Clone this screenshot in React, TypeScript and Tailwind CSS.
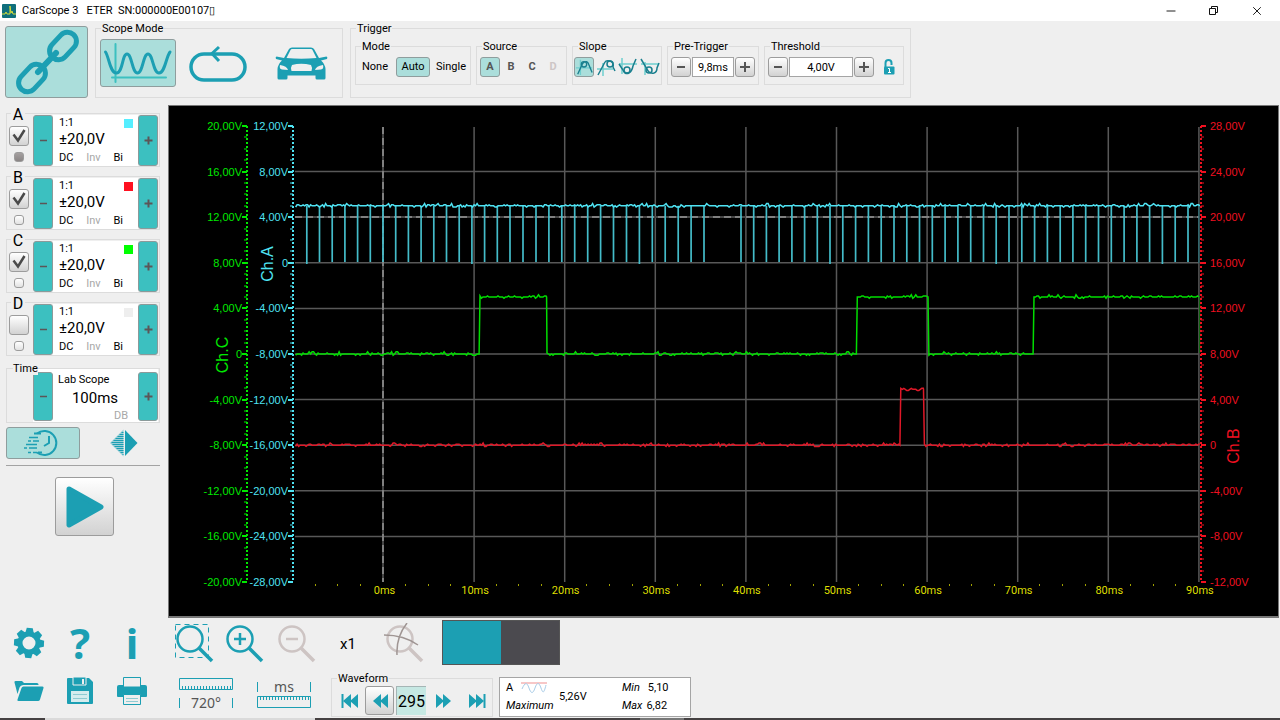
import type { ReactNode } from "react";
import { Minus, X } from "lucide-react";
import clsx from "clsx";

const TEAL = "#1c9fb3";

const raised = "border border-[#9c9c9c] bg-linear-to-b from-white to-[#d2d2d2]";
const pressed = "border border-[#8f9d9d] bg-[#abdedb]";

/* ---------- small building blocks ---------- */

function Group({ title, className, children }: { title: string; className?: string; children: ReactNode }) {
  return (
    <fieldset className="min-w-0 border border-[#dcdcdc]">
      <legend className="ml-[5px] px-px pt-0.5 text-[11px] leading-[14px]">{title}</legend>
      <div className={clsx("flex", className)}>{children}</div>
    </fieldset>
  );
}

function StepButton({ label, plus }: { label: string; plus?: boolean }) {
  return (
    <button
      type="button"
      aria-label={label}
      className="flex w-5 shrink-0 items-center justify-center self-stretch rounded-[3px] border border-[#8b9a9a] bg-[#3cc0c0]"
    >
      <svg viewBox="0 0 9 9" className="size-[9px]" stroke="#5c5557" strokeWidth={plus ? 2 : 1.5}>
        <path d={plus ? "M0.500 4.500h8M4.500 0.500v8" : "M1 4.500h7"} />
      </svg>
    </button>
  );
}

function SpinButton({ label, plus }: { label: string; plus?: boolean }) {
  return (
    <button type="button" aria-label={label} className={clsx("flex size-5 items-center justify-center rounded-[3px]", raised)}>
      <svg viewBox="0 0 10 10" className="size-2.5" stroke="#555" strokeWidth="2">
        <path d={plus ? "M0 5h10M5 0v10" : "M1 5h8"} />
      </svg>
    </button>
  );
}

/* ---------- header ---------- */

function TitleBar() {
  return (
    <header className="flex h-[21px] items-center bg-white pr-px pl-0.5 text-[11px]">
      <svg viewBox="0 0 14 14" className="size-3.5">
        <rect width="14" height="14" rx="1" fill="#0f6f7c" />
        <path d="M0 10h3l1-2 1 2h3V2l1 7 1-2 1 3h3" fill="none" stroke="#d3dc3a" />
      </svg>
      <h1 className="ml-1.5 pt-0.5 whitespace-pre">{"CarScope 3   ETER  SN:000000E00107▯"}</h1>
      <div className="ml-auto flex">
        <button type="button" aria-label="Minimize" className="flex w-[42px] justify-center">
          <Minus className="size-3.5" strokeWidth={1.5} />
        </button>
        <button type="button" aria-label="Restore" className="flex w-[42px] items-center justify-center">
          <svg viewBox="0 0 11 11" className="size-[11px]" fill="none" stroke="#111">
            <path d="M1.500 3.500h6v6h-6zM3.500 3V1.500h6v6H8" />
          </svg>
        </button>
        <button type="button" aria-label="Close" className="flex w-[45px] justify-center">
          <X className="size-3.5" strokeWidth={1.5} />
        </button>
      </div>
    </header>
  );
}

function ChainIcon() {
  return (
    <svg viewBox="0 0 68 68" className="size-[68px]" fill="none" stroke={TEAL}>
      <rect x="34.500" y="9" width="31" height="18" rx="9" strokeWidth="5" transform="rotate(-47 50 18)" />
      <rect x="3.500" y="41" width="31" height="18" rx="9" strokeWidth="5" transform="rotate(-47 19 50)" />
      <path d="M25 44 43 25" strokeWidth="6" strokeLinecap="round" />
    </svg>
  );
}

function CarIcon() {
  return (
    <svg viewBox="0 0 53 33" className="h-[33px] w-[53px]" fill={TEAL}>
      <path
        fillRule="evenodd"
        d="M9 11 14 2Q15 0.500 17 0.500H36Q38 0.500 39 2L44 11 51.500 9.500Q53 10 52 12L46 13.500Q50 17 50.500 22V31Q50.500 32.500 49 32.500H42Q40.500 32.500 40.500 31V28.500H12.500V31Q12.500 32.500 11 32.500H4Q2.500 32.500 2.500 31V22Q3 17 7 13.500L1 12Q0 10 1.500 9.500ZM11.500 11Q26 12.500 41.500 11L37.500 3Q37 2 36 2H17Q16 2 15.500 3ZM5 18Q4 22 7 22.500L13 23Q12 19 5 18ZM48 18Q49 22 46 22.500L40 23Q41 19 48 18ZM17 18Q15.500 20 16.500 24H36.500Q37.500 20 36 18Q26 15.500 17 18Z"
      />
    </svg>
  );
}

// light lines are the trigger level and instant, dark one is the signal
const SLOPES = [
  { name: "Rising slope", level: "M1 11H19M6 2V19", signal: "M3 18 8 7Q9 4 13 4 15 5 16 9L19 16", cx: 10, cy: 7 },
  { name: "Rising slope late", level: "M1 12H17M7 6V19", signal: "M2 18 9 5Q10 3 14 4 18 5 17 10L19 14", cx: 14, cy: 7 },
  { name: "Falling slope", level: "M1 7H19M4 1V17", signal: "M1 7 5 13Q7 18 11 16 14 14 15 9L18 2", cx: 9, cy: 13 },
  { name: "Falling slope late", level: "M1 7H19M5 5V18", signal: "M1 2 7 12Q9 17 14 16 17 15 17 11L19 6", cx: 9, cy: 13 },
];

function Toolbar() {
  return (
    <div className="flex h-[84px] items-start gap-[7px] pl-[5px]">
      <button type="button" aria-label="Connect" aria-pressed="true" className={clsx("mt-[5px] flex h-[72px] w-[83px] items-center justify-center rounded-[3px]", pressed)}>
        <ChainIcon />
      </button>

      <div className="-mt-px flex gap-[7px]">
        <Group title="Scope Mode" className="gap-1 pt-[3px] pb-2.5 pl-1">
          <button type="button" aria-label="Waveform mode" aria-pressed="true" className={clsx("h-12 w-19 rounded-[3px]", pressed)}>
            <svg viewBox="0 0 76 48" className="-m-px h-12 w-19" fill="none" strokeLinecap="round">
              <path d="M15.500 5V43M12 38.500H66" stroke="#3cc0c0" strokeWidth="2" />
              <path d="M5.500 13C9 18 10 34 16.500 34S22 15 27 15 32 34 37.500 34 43 15 48 15 53 34 59 34C65 34 66 18 70 13" stroke={TEAL} strokeWidth="3" />
            </svg>
          </button>
          <button type="button" aria-label="Loop mode" className="flex h-12 w-19 justify-center">
            <svg viewBox="0 0 58 48" className="h-12 w-[58px]" fill="none" stroke={TEAL} strokeWidth="3.500">
              <rect x="2" y="15" width="54" height="26" rx="13" />
              <path d="M30 8 23 14.500 30 22" strokeWidth="3" />
            </svg>
          </button>
          <button type="button" aria-label="Vehicle" className="flex h-12 w-[82px] items-center justify-center">
            <CarIcon />
          </button>
        </Group>

        <Group title="Trigger" className="gap-[5px] pt-0.5 pr-1.5 pb-3 pl-1">
          <Group title="Mode" className="gap-1 px-0.5 pt-[3px] pb-[7px] text-[11px]">
            <button type="button" className="h-5 w-[34px]">None</button>
            <button type="button" aria-pressed="true" className={clsx("h-5 w-[34px] rounded-[3px]", pressed)}>Auto</button>
            <button type="button" className="h-5 w-[34px]">Single</button>
          </Group>

          <Group title="Source" className="gap-px px-[3px] pt-[3px] pb-[7px] text-[11px] font-bold text-[#555]">
            <button type="button" aria-pressed="true" className={clsx("size-5 rounded-[3px]", pressed)}>A</button>
            <button type="button" className="size-5">B</button>
            <button type="button" className="size-5">C</button>
            <button type="button" disabled className="size-5 text-[#cdc6c6]">D</button>
          </Group>

          <Group title="Slope" className="gap-0.5 px-px pt-[3px] pb-[7px]">
            {SLOPES.map((s, i) => (
              <button key={s.name} type="button" aria-label={s.name} className={clsx("size-5 rounded-[3px]", i === 0 && pressed)}>
                <svg viewBox="0 0 20 20" className="size-full" fill="none">
                  <path d={s.level} stroke="#6fcfcf" strokeWidth="1.500" />
                  <path d={s.signal} stroke="#197f8e" strokeWidth="1.500" />
                  <circle cx={s.cx} cy={s.cy} r="3" stroke="#197f8e" strokeWidth="1.500" />
                </svg>
              </button>
            ))}
          </Group>

          <Group title="Pre-Trigger" className="gap-px px-[3px] pt-[3px] pb-[7px]">
            <SpinButton label="Less pre-trigger" />
            <input aria-label="Pre-trigger" defaultValue="9,8ms" className="h-5 w-[42px] border border-[#a5a5a5] bg-white text-center text-[11px]" />
            <SpinButton label="More pre-trigger" plus />
          </Group>

          <Group title="Threshold" className="gap-px pt-[3px] pr-2 pb-[7px] pl-[3px]">
            <SpinButton label="Lower threshold" />
            <input aria-label="Threshold" defaultValue="4,00V" className="h-5 w-16 border border-[#a5a5a5] bg-white text-center text-[11px]" />
            <SpinButton label="Raise threshold" plus />
            <button type="button" aria-label="Lock threshold" className="ml-2 flex h-5 items-center">
              <svg viewBox="0 0 12 16" className="h-4 w-3">
                <path d="M2.500 8V4a3 3 0 0 1 6 0v2" fill="none" stroke={TEAL} strokeWidth="2" />
                <rect x="1" y="7.500" width="10.500" height="8" rx="1" fill={TEAL} />
                <path d="M5 9.500h1.500v4M5 13.500h3" fill="none" stroke="#fff" />
              </svg>
            </button>
          </Group>
        </Group>
      </div>
    </div>
  );
}

/* ---------- left column ---------- */

const CHANNELS = [
  { id: "A", on: true, reference: true, swatch: "bg-[#55eeff]" },
  { id: "B", on: true, reference: false, swatch: "bg-[#ff1020]" },
  { id: "C", on: true, reference: false, swatch: "bg-[#00ff00]" },
  { id: "D", on: false, reference: false, swatch: "bg-[#eeeeee]" },
];

function Channel({ id, on, reference, swatch }: (typeof CHANNELS)[number]) {
  return (
    <section className="flex h-[54px] border border-[#dcdcdc] pt-px pr-px">
      <div className="flex w-[26px] flex-col items-center">
        <label htmlFor={`on-${id}`} className="-mt-2.5 mb-px -ml-1 bg-[#efefef] px-0.5 text-base leading-5">{id}</label>
        <span className="relative -ml-0.5 size-5">
          <input id={`on-${id}`} type="checkbox" defaultChecked={on} className={clsx("peer size-5 appearance-none rounded-[3px]", raised)} />
          <svg viewBox="0 0 20 20" className="pointer-events-none absolute inset-0 hidden size-5 peer-checked:block" fill="none" stroke="#4a4a4a" strokeWidth="2.500">
            <path d="M4.500 8.500 9 14.500 15.500 4" />
          </svg>
        </span>
        <input
          type="radio"
          name="reference"
          aria-label={`Trigger on ${id}`}
          defaultChecked={reference}
          className="mt-1.5 -ml-0.5 size-2.5 appearance-none rounded-[3px] border border-[#9c9c9c] bg-linear-to-b from-white to-[#e2e2e2] checked:from-[#a5a0a0] checked:to-[#8a8585]"
        />
      </div>
      <StepButton label={`${id} range down`} />
      <div className="flex-1 bg-white pt-px pr-[5px] pl-1.5">
        <div className="flex h-[15px] items-center justify-between text-[11px]">
          <span>1:1</span>
          <span className={clsx("size-[9px]", swatch)} />
        </div>
        <p className="text-[15px] leading-[17px]">±20,0V</p>
        <div className="flex justify-between pt-0.5 pr-2.5 text-[11px] leading-4">
          <button type="button">DC</button>
          <button type="button" className="text-[#a8a8a8]">Inv</button>
          <button type="button">Bi</button>
        </div>
      </div>
      <StepButton label={`${id} range up`} plus />
    </section>
  );
}

function Gear() {
  return (
    <svg viewBox="-16 -16 32 32" className="size-8" fill={TEAL}>
      <circle r="9" fill="none" stroke={TEAL} strokeWidth="5" />
      {[0, 45, 90, 135, 180, 225, 270, 315].map((a) => (
        <path key={a} d="M-4.500 -9-3 -15H3L4.500 -9Z" transform={`rotate(${a + 3})`} />
      ))}
    </svg>
  );
}

function Sidebar() {
  return (
    <aside className="flex w-[168px] shrink-0 flex-col pt-2 pr-2 pl-1.5">
      <div className="flex flex-col gap-[9px]">
        {CHANNELS.map((c) => <Channel key={c.id} {...c} />)}
      </div>

      {/* Time base */}
      <section className="mt-3 flex h-[55px] border border-[#dcdcdc] pr-px">
        <h2 className="relative -mt-2 w-[26px] self-start pl-1.5 text-[11px] leading-4">
          <span className="bg-[#efefef]">Time</span>
        </h2>
        <div className="flex flex-1 bg-white pt-[3px] pb-px">
          <StepButton label="Shorter time" />
          <div className="flex-1 pt-px pr-2.5 pl-[5px] text-[11px] leading-[13px]">
            <p>Lab Scope</p>
            <p className="pl-1 text-center text-[15px] leading-6">100ms</p>
            <p className="text-right text-[11px] leading-3 text-[#a8a8a8]">DB</p>
          </div>
          <StepButton label="Longer time" plus />
        </div>
      </section>

      <div className="mt-1 flex items-center">
        <button type="button" aria-label="Fast capture" aria-pressed="true" className={clsx("flex h-8 w-[74px] items-center justify-center rounded-[3px]", pressed)}>
          <svg viewBox="0 0 38 28" className="h-7 w-[38px]" fill="none" stroke={TEAL} strokeWidth="2">
            <path d="M13 4.500A12 12 0 1 1 13 23.500" />
            <path d="M25 7v7l-5 3M10 4.500h7M14 23.500h4" />
            <path d="M5 8.500h9M4 12h3M9 12h6M2 15.500h11M0 19h3M5 19h8M4 23.500h3M9 23.500h4" strokeWidth="1.500" />
          </svg>
        </button>
        <button type="button" aria-label="Mirror" className="ml-[30px]">
          <svg viewBox="0 0 28 28" className="size-7" stroke={TEAL}>
            <path d="M15 1 27.500 14 15 27Z" fill={TEAL} stroke="none" />
            <path d="M13.500 0.500 0 14 13.500 27.500Z" fill={TEAL} fillOpacity="0.400" stroke="none" />
            <path d="M11.500 3.500h2M9.500 5.500h4M7.500 7.500h6M5.500 9.500h8M3.500 11.500h10M1.500 13.500h12M2.500 15.500h11M4.500 17.500h9M6.500 19.500h7M8.500 21.500h5M10.500 23.500h3M12.500 25.500h1" />
          </svg>
        </button>
      </div>

      <hr className="mt-1.5 border-[#a3a3a3]" />

      <button type="button" aria-label="Run" className={clsx("mt-[11px] ml-[49px] flex size-[59px] items-center justify-center rounded-[3px]", raised)}>
        <svg viewBox="0 0 38 42" className="h-[42px] w-[38px]">
          <path d="M3 3 35 21 3 39Z" fill={TEAL} stroke={TEAL} strokeWidth="5" strokeLinejoin="round" />
        </svg>
      </button>

      <nav className="mt-auto grid w-[150px] grid-cols-[46px_56px_48px] items-center justify-items-center pb-[3px] font-['Noto_Sans',sans-serif] text-[#1c9fb3]">
        <button type="button" aria-label="Settings"><Gear /></button>
        <button type="button" aria-label="Help" className="h-12 text-[42px] leading-12 font-bold">?</button>
        <button type="button" aria-label="Information" className="h-12 text-[42px] leading-12 font-bold">i</button>
        <button type="button" aria-label="Open">
          <svg viewBox="0 0 30 22" className="h-[22px] w-[30px]" fill={TEAL}>
            <path d="M0.500 2.500Q0 1 1.500 1H8L10 3H23Q24.500 3 24.500 4.500V5H9Q6.500 5 5.500 7.500L3.500 14Z" />
            <path d="M9.500 6.500H28.500Q30 6.500 29.500 8L26 19.500Q25.500 21 24 21H4.500Q3 21 3.500 19.500L7.500 8Q8 6.500 9.500 6.500Z" />
          </svg>
        </button>
        <button type="button" aria-label="Save" className="flex h-12 items-center">
          <svg viewBox="0 0 28 28" className="size-7">
            <path d="M2 1H23L27 5V26Q27 27 26 27H2Q1 27 1 26V2Q1 1 2 1Z" fill={TEAL} />
            <path d="M7 0H20V8H7Z" fill={TEAL} stroke="#efefef" />
            <path d="M16 2h2v5h-2z" fill="#efefef" />
            <path d="M5 14H23V25H5Z" fill="#d5ecee" />
            <path d="M7 17.500H21M7 21.500H21" stroke="#8fcbd2" />
          </svg>
        </button>
        <button type="button" aria-label="Print">
          <svg viewBox="0 0 32 30" className="h-[30px] w-8">
            <path d="M3 9H29Q31 9 31 11V20Q31 21 30 21H2Q1 21 1 20V11Q1 9 3 9Z" fill={TEAL} />
            <path d="M7.500 1.500H24.500V11H7.500Z" fill="#efefef" stroke={TEAL} />
            <path d="M7.500 18.500H24.500V28.500H7.500Z" fill="#efefef" stroke={TEAL} />
            <path d="M10 22.500H22M10 25.500H22" stroke="#8fcbd2" />
          </svg>
        </button>
      </nav>
    </aside>
  );
}

/* ---------- graph ---------- */

const TOP = 20;
const HEIGHT = 456;
const tx = (ms: number) => 214.5 + ms * 9.06;
const vy = (top: number, v: number) => TOP + ((top - v) * HEIGHT) / 40;
const volts = (v: number) => (v === 0 ? "0" : `${v},00V`);

// repeatable noise, so the traces stay the same between renders
function noise(seed: number) {
  let s = seed;
  return () => {
    s = (s * 16807) % 2147483647;
    const r = s / 2147483647;
    return r > 0.97 ? 2.2 : r > 0.75 ? 1 : r < 0.12 ? -1.2 : 0;
  };
}

type Level = [from: number, to: number, volts: number];

function trace(levels: Level[], top: number, seed: number) {
  const n = noise(seed);
  const pts: string[] = [];
  for (const [from, to, v] of levels) {
    for (let x = tx(from); x < tx(to); x += 1.5) {
      pts.push(`${x.toFixed(1)},${(vy(top, v) - n()).toFixed(1)}`);
    }
    pts.push(`${tx(to).toFixed(1)},${vy(top, v).toFixed(1)}`);
  }
  return pts.join(" ");
}

const START = -9.7;
const CAM: Level[] = [[START, 10.55, 0], [10.65, 18, 5], [18.05, 52.2, 0], [52.3, 60.1, 5], [60.2, 71.7, 0], [71.8, 90, 5]];
const SPARK: Level[] = [[START, 57, 0], [57.1, 59.6, 4.9], [59.7, 90, 0]];

// crank teeth: first tooth, step in ms, number of teeth
const TEETH = [[-8.47, 1.402, 17], [15.4, 1.427, 15], [39.46, 1.403, 8], [50.7, 1.411, 28]].flatMap(([first, step, count]) =>
  Array.from({ length: count }, (_, i) => first + i * step),
);

function Axis({ x, top, color, name, nameX, nameY, right }: { x: number; top: number; color: string; name: string; nameX: number; nameY: number; right?: boolean }) {
  const dir = right ? 1 : -1;
  return (
    <g stroke={color} fill={color}>
      <path d={`M${x} ${TOP}V${TOP + HEIGHT}`} strokeWidth="2" strokeDasharray="2 2" />
      {Array.from({ length: 41 }, (_, i) => {
        const y = Math.round(vy(top, top - i));
        return <path key={i} d={`M${x} ${y}h${dir * (i % 4 ? 3 : 5)}`} strokeWidth={i % 4 ? 1 : 2} />;
      })}
      {Array.from({ length: 11 }, (_, i) => (
        <text key={i} x={x + (right ? 9 : -5)} y={Math.round(vy(top, top - i * 4)) + 4} textAnchor={right ? "start" : "end"} stroke="none" fontSize="11">
          {volts(top - i * 4)}
        </text>
      ))}
      <text transform={`translate(${nameX} ${nameY}) rotate(-90)`} textAnchor="middle" stroke="none" fontSize="16">{name}</text>
    </g>
  );
}

function Graph() {
  return (
    <div className="mr-px border-t border-r border-b-2 border-l border-[#777] bg-black">
      <svg viewBox="0 0 1109 510" className="block w-full font-['Liberation_Sans',sans-serif]" fill="none">
        <g stroke="#585858" strokeWidth="1.500">
          {[1, 3, 4, 5, 6, 7, 8, 9].map((i) => <path key={i} d={`M126 ${vy(40, 40 - i * 4)}H1030`} />)}
          {[10, 20, 30, 40, 50, 60, 70, 80, 90].map((ms) => <path key={ms} d={`M${tx(ms)} 21V476`} />)}
        </g>
        {/* trigger level and trigger instant */}
        <path d="M126 111H1030M214 21V476" stroke="#454545" strokeWidth="2" />
        <path d="M126 111H1030M214 21V476" stroke="#808080" strokeWidth="2" strokeDasharray="7 4" />

        {TEETH.map((t, i) => (
          <path key={i} d={`M${tx(t).toFixed(1)} ${vy(12, 5)}V${i % 13 === 0 ? 158 : 156}`} stroke="#44bcc9" strokeWidth="1.700" />
        ))}
        <path d={`M${tx(90)} 99V157`} stroke="#257780" />
        <polyline points={trace([[START, 90.1, 5]], 12, 91)} stroke="#4fe3f3" strokeWidth="1.500" />
        <polyline points={trace(SPARK, 28, 417)} stroke="#e01828" strokeWidth="1.500" />
        <polyline points={trace(CAM, 20, 77)} stroke="#00dd00" strokeWidth="1.500" />
        <path d={`M${tx(90.1)} 191V247`} stroke="#007a00" />

        <Axis x={78} top={20} color="#00e800" name="Ch.C" nameX={59} nameY={249} />
        <Axis x={124} top={12} color="#4fe3f3" name="Ch.A" nameX={104} nameY={158} />
        <Axis x={1032} top={28} color="#f01020" name="Ch.B" nameX={1070} nameY={340} right />

        <g fill="#dede00" className="font-['Roboto',sans-serif]">
          {Array.from({ length: 10 }, (_, i) => (
            <text key={i} x={tx(i * 10) + 1} y="488" textAnchor="middle" fontSize="11">{i * 10}ms</text>
          ))}
          {Array.from({ length: 39 }, (_, i) => i - 3)
            .filter((i) => i % 4 !== 0)
            .map((i) => <rect key={i} x={Math.round(tx(i * 2.5)) - 1} y="478" width="1" height="2" fill="#a0a000" />)}
        </g>
      </svg>
    </div>
  );
}

/* ---------- bottom bar ---------- */

function Lens({ color, children }: { color: string; children?: ReactNode }) {
  return (
    <svg viewBox="0 0 40 40" className="size-10" fill="none" stroke={color} strokeWidth="2.500">
      <circle cx="16" cy="16" r="12.500" />
      <path d="M25 25 38 38" strokeWidth="3.500" />
      {children}
    </svg>
  );
}

function Skip({ back, end }: { back?: boolean; end?: boolean }) {
  return (
    <svg viewBox="0 0 18 14" className={clsx("h-3.5 w-4.5", back && "-scale-x-100")} fill={TEAL}>
      <path d="M1 0 9 7 1 14ZM8 0 16 7 8 14Z" />
      {end && <path d="M15.500 0H17.500V14H15.500Z" />}
    </svg>
  );
}

function BottomBar() {
  return (
    <div className="flex h-[100px] flex-col justify-between pl-1.5">
      <div className="flex h-[49px] items-center">
        <button type="button" aria-label="Zoom to area">
          <Lens color={TEAL}>
            <path d="M1.500 1.500H34.500V34.500H1.500Z" strokeWidth="1" strokeDasharray="5 4" />
          </Lens>
        </button>
        <button type="button" aria-label="Zoom in" className="ml-2.5">
          <Lens color={TEAL}><path d="M10 16h12M16 10v12" /></Lens>
        </button>
        <button type="button" aria-label="Zoom out" disabled className="ml-3">
          <Lens color="#cdc4c3"><path d="M10 16h12" /></Lens>
        </button>
        <span className="ml-6 w-5 pt-1 text-[15px]">x1</span>
        <button type="button" aria-label="Follow cursor" disabled className="ml-6">
          <Lens color="#cdc4c3">
            <path d="M0 12Q20 12 34 22M23 0Q12 14 13 32" stroke="#9f9593" strokeWidth="1.500" />
          </Lens>
        </button>
        <div className="ml-4.5 flex h-[45px] w-[118px] border border-[#555]">
          <div className="w-1/2 bg-[#1c9fb3]" />
          <div className="w-1/2 bg-[#4b4a4f]" />
        </div>
      </div>

      <div className="flex h-[50px] items-end text-sm text-[#555]">
        <button type="button" className="mb-2.5 ml-[5px] flex w-[54px] flex-col">
          <svg viewBox="0 0 54 12" className="h-3 w-[54px]" fill="none" stroke={TEAL}>
            <path d="M0.500 0.500H53.500V11.500H0.500Z" />
            <path d="M3 9.500H52" strokeWidth="3" strokeDasharray="1 2" />
          </svg>
          <span className="mt-2 w-full border-x border-[#1c9fb3] font-['Noto_Sans',sans-serif] leading-[10px]">720°</span>
        </button>
        <button type="button" className="mb-2.5 ml-6 flex w-[54px] flex-col">
          <span className="mb-1 w-full border-x border-[#1c9fb3] font-['Noto_Sans',sans-serif] leading-[10px]">ms</span>
          <svg viewBox="0 0 54 12" className="h-3 w-[54px]" fill="none" stroke={TEAL}>
            <path d="M0.500 0.500H53.500V11.500H0.500Z" />
            <path d="M3 2.500H52" strokeWidth="3" strokeDasharray="1 2" />
          </svg>
        </button>

        <div className="ml-5 pb-px text-black">
          <Group title="Waveform" className="items-center gap-px pb-px pl-1">
            <button type="button" aria-label="First" className="flex h-7 w-[27px] items-center justify-center"><Skip back end /></button>
            <button type="button" aria-label="Previous" className={clsx("mx-px flex size-[29px] items-center justify-center rounded-[3px]", raised)}><Skip back /></button>
            <input aria-label="Waveform number" defaultValue="295" className="h-[29px] w-[30px] border-t border-l border-[#a5b5b5] bg-[#c6e8e3] text-center text-base" />
            <button type="button" aria-label="Next" className="flex h-7 w-[34px] items-center justify-center"><Skip /></button>
            <button type="button" aria-label="Last" className="flex h-7 w-[30px] items-center justify-center"><Skip end /></button>
          </Group>
        </div>

        <dl className="mb-px ml-1.5 grid h-10 w-[192px] grid-cols-[52px_64px_1fr] items-center border border-[#a5a5a5] bg-white pl-1.5 text-[11px] leading-[18px] text-black">
          <dt>
            <span className="flex items-center gap-2">
              A
              <svg viewBox="0 0 26 12" className="h-3 w-[26px]" fill="none">
                <path d="M0 1H26" stroke="#f5b5b5" strokeWidth="1.500" />
                <path d="M1 7C4 0 6 0 8 6S12 12 14 6 18 0 20 6 23 11 25 3" stroke="#a8cce8" />
              </svg>
            </span>
            <span className="block italic">Maximum</span>
          </dt>
          <dd className="pl-px">5,26V</dd>
          <dd>
            <p className="flex gap-2"><i>Min</i>5,10</p>
            <p className="flex gap-1"><i>Max</i>6,82</p>
          </dd>
        </dl>
      </div>
    </div>
  );
}

export default function App() {
  return (
    <div className="flex min-h-screen flex-col bg-[#efefef] font-['Roboto','Noto_Sans',sans-serif] text-black">
      <TitleBar />
      <Toolbar />
      <main className="flex flex-1">
        <Sidebar />
        <div className="min-w-0 flex-1">
          <Graph />
          <BottomBar />
        </div>
      </main>
      <footer className="flex h-0.5 bg-[#454142]">
        <div className="ml-[45px] w-[270px] bg-[#dadada]" />
        <div className="ml-[325px] w-11 bg-[#777]" />
      </footer>
    </div>
  );
}
